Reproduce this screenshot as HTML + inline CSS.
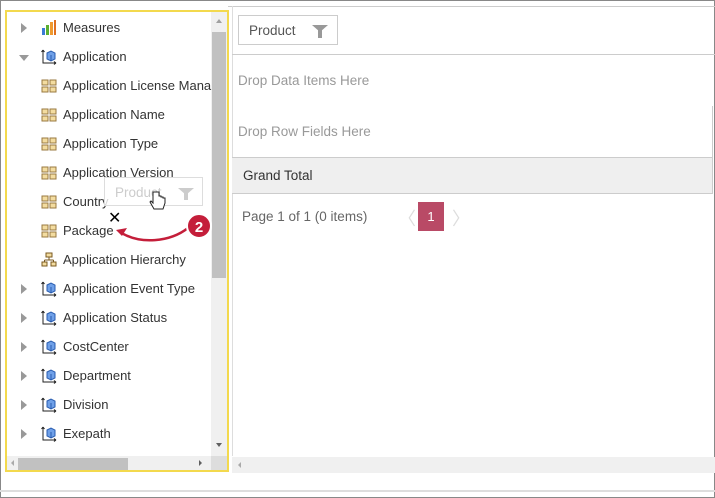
<!DOCTYPE html><html><head><style>
body{margin:0;width:715px;height:498px;position:relative;overflow:hidden;background:#fff;font-family:"Liberation Sans",sans-serif;font-size:13px;color:#333}
.a{position:absolute}
.row{position:absolute;left:0;height:20px;line-height:20px}
.tri{position:absolute;left:21px;top:5px;width:0;height:0;border-top:5px solid transparent;border-bottom:5px solid transparent;border-left:6px solid #999}
.tri.d{left:19px;top:8px;border-left:5px solid transparent;border-right:5px solid transparent;border-top:6px solid #999;border-bottom:0}
.lbl{position:absolute;left:63px;white-space:nowrap}
.ic{position:absolute;left:41px;top:2px}
.r{font-size:13.5px}
</style></head><body>
<div class="a" style="left:0;top:0;width:713px;height:496px;border:1px solid #888"></div>
<div class="a" style="left:0;top:490px;width:715px;height:2px;background:#ddd"></div>
<div class="a" style="left:5px;top:10px;width:220px;height:458px;border:2px solid #f3d94e;overflow:hidden">
<div class="a" style="left:204px;top:0;width:16px;height:444px;background:#f0f0f0"></div>
<div class="a" style="left:205px;top:20px;width:14px;height:246px;background:#c1c1c1"></div>
<div class="a" style="left:209px;top:7px;border-left:3px solid transparent;border-right:3px solid transparent;border-bottom:4px solid #a0a0a0"></div>
<div class="a" style="left:209px;top:431px;border-left:3px solid transparent;border-right:3px solid transparent;border-top:4px solid #606060"></div>
<div class="a" style="left:0;top:444px;width:204px;height:14px;background:#f0f0f0"></div>
<div class="a" style="left:204px;top:444px;width:16px;height:14px;background:#ddd"></div>
<div class="a" style="left:11px;top:446px;width:110px;height:12px;background:#c1c1c1"></div>
<div class="a" style="left:4px;top:448px;border-top:3px solid transparent;border-bottom:3px solid transparent;border-right:3px solid #aaa"></div>
<div class="a" style="left:192px;top:448px;border-top:3px solid transparent;border-bottom:3px solid transparent;border-left:3px solid #606060"></div>
</div>
<div id="tree"></div>
<script>
var rows=[["Measures","m",1],["Application","c",2],["Application License Mana","g",0],["Application Name","g",0],["Application Type","g",0],["Application Version","g",0],["Country","g",0],["Package","g",0],["Application Hierarchy","h",0],["Application Event Type","c",1],["Application Status","c",1],["CostCenter","c",1],["Department","c",1],["Division","c",1],["Exepath","c",1]];
var ic={m:'<svg width="16" height="16"><rect x="1" y="8" width="3" height="7" fill="#3a7bd5"/><rect x="5" y="5" width="3" height="10" fill="#5bb030"/><rect x="9" y="2" width="3" height="13" fill="#f09a30"/><rect x="13" y="0" width="2" height="15" fill="#e07020"/></svg>',
c:'<svg width="16" height="16"><path d="M2 1v13h13M2 1l-1.5 2M2 1l1.5 2M15 14l-2-1.5M15 14l-2 1.5" stroke="#222" fill="none"/><path d="M6 4l4-2 4 2v6l-4 2-4-2z" fill="#6fa0e8" stroke="#2a5db0"/><path d="M10 6v6" stroke="#2a5db0"/></svg>',
g:'<svg width="16" height="16"><g fill="#f3dca0" stroke="#9a7a40"><rect x="1" y="2" width="6" height="5"/><rect x="9" y="2" width="6" height="5"/><rect x="1" y="9" width="6" height="5"/><rect x="9" y="9" width="6" height="5"/></g></svg>',
h:'<svg width="16" height="16"><g fill="#f3dca0" stroke="#7a5a20"><rect x="5" y="1" width="6" height="4"/><rect x="1" y="10" width="5" height="4"/><rect x="10" y="10" width="5" height="4"/></g><path d="M8 5v3M3.5 8h9M3.5 8v2M12.5 8v2" stroke="#7a5a20" fill="none"/></svg>'};
var h='';rows.forEach(function(r,i){var y=18+i*29;h+='<div class="row" style="top:'+y+'px;width:210px">'+(r[2]==1?'<div class="tri"></div>':r[2]==2?'<div class="tri d"></div>':'')+'<span class="ic">'+ic[r[1]]+'</span><span class="lbl">'+r[0]+'</span></div>';});
document.getElementById('tree').innerHTML=h;
</script>
<div class="a" style="left:228px;top:6px;width:487px;height:1px;background:#ccc"></div>
<div class="a" style="left:232px;top:6px;width:1px;height:450px;background:#ddd"></div>
<div class="a" style="left:238px;top:15px;width:100px;height:30px;border:1px solid #ccc;box-sizing:border-box"></div>
<div class="a r" style="left:249px;top:23px;color:#555">Product</div>
<div class="a" style="left:312px;top:25px;border-left:8px solid transparent;border-right:8px solid transparent;border-top:7px solid #999"></div>
<div class="a" style="left:318px;top:30px;width:4px;height:8px;background:#999"></div>
<div class="a" style="left:232px;top:54px;width:483px;height:1px;background:#ccc"></div>
<div class="a r" style="left:238px;top:73px;color:#999">Drop Data Items Here</div>
<div class="a r" style="left:238px;top:124px;color:#999">Drop Row Fields Here</div>
<div class="a" style="left:232px;top:157px;width:481px;height:35px;background:#efefef;border-top:1px solid #ccc;border-bottom:1px solid #ccc"></div>
<div class="a r" style="left:243px;top:168px;color:#333">Grand Total</div>
<div class="a" style="left:712px;top:106px;width:1px;height:87px;background:#ccc"></div>
<div class="a r" style="left:242px;top:209px;color:#666">Page 1 of 1 (0 items)</div>
<div class="a" style="left:398px;top:205px;color:#ddd;font-size:18px">〈</div>
<div class="a" style="left:418px;top:202px;width:26px;height:29px;background:#b94a66;color:#fff;text-align:center;line-height:29px">1</div>
<div class="a" style="left:452px;top:205px;color:#ddd;font-size:18px">〉</div>
<div class="a" style="left:232px;top:457px;width:483px;height:16px;background:#f0f0f0"></div>
<div class="a" style="left:238px;top:462px;border-top:3px solid transparent;border-bottom:3px solid transparent;border-right:3px solid #aaa"></div>
<div class="a" style="left:104px;top:177px;width:99px;height:29px;border:1px solid #ddd;background:rgba(255,255,255,.8);box-sizing:border-box"></div>
<div class="a r" style="left:115px;top:185px;color:#ccc">Product</div>
<div class="a" style="left:178px;top:188px;border-left:8px solid transparent;border-right:8px solid transparent;border-top:7px solid #ccc"></div>
<div class="a" style="left:184px;top:193px;width:4px;height:7px;background:#ccc"></div>
<svg class="a" style="left:148px;top:190px" width="20" height="24"><path d="M5 2v11l-2-2-1 1 4 7h9l2-6v-5h-2v-1h-2v-1h-2V2z" fill="#fff" stroke="#222"/></svg>
<div class="a" style="left:108px;top:208px;font-size:16px;color:#000">✕</div>
<svg class="a" style="left:110px;top:210px" width="110" height="40"><path d="M78 18C60 32 30 35 10 22" stroke="#c41e3a" stroke-width="2.5" fill="none"/><path d="M6 20l11-2-5 8z" fill="#c41e3a"/><circle cx="89" cy="16" r="12" fill="#c41e3a" stroke="#fff" stroke-width="2"/><text x="89" y="22" text-anchor="middle" fill="#fff" font-weight="bold" font-size="15" font-family="Liberation Sans">2</text></svg>
</body></html>
